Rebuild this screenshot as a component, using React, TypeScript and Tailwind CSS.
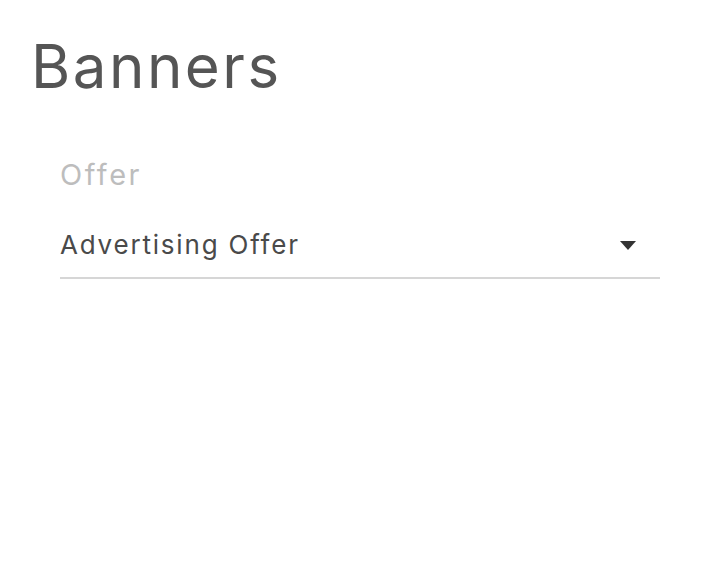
import React from "react";

export default function App() {
  return (
    <div className="min-h-[567px] w-[720px] bg-white" style={{ fontFamily: "Inter, 'Open Sans', sans-serif" }}>
      <div className="pl-[31px] pt-[30px]">
        <h1 className="text-[60px] leading-[72px] font-normal text-[#555555] tracking-[2.5px]">Banners</h1>
      </div>
      <div className="ml-[60px] mt-[56px] w-[600px]">
        <div className="text-[29px] leading-[34px] text-[#bdbdbd] tracking-[2.5px]">Offer</div>
        <div className="mt-[37px] flex items-center justify-between border-b-2 border-[#d6d6d6] pb-[16px]">
          <span className="text-[26px] leading-[32px] text-[#4a4a4a] tracking-[1.8px]">Advertising Offer</span>
          <svg width="16" height="9" viewBox="0 0 16 9" className="mr-[24px]">
            <path d="M0 0 L16 0 L8 9 Z" fill="#333333" />
          </svg>
        </div>
      </div>
    </div>
  );
}
